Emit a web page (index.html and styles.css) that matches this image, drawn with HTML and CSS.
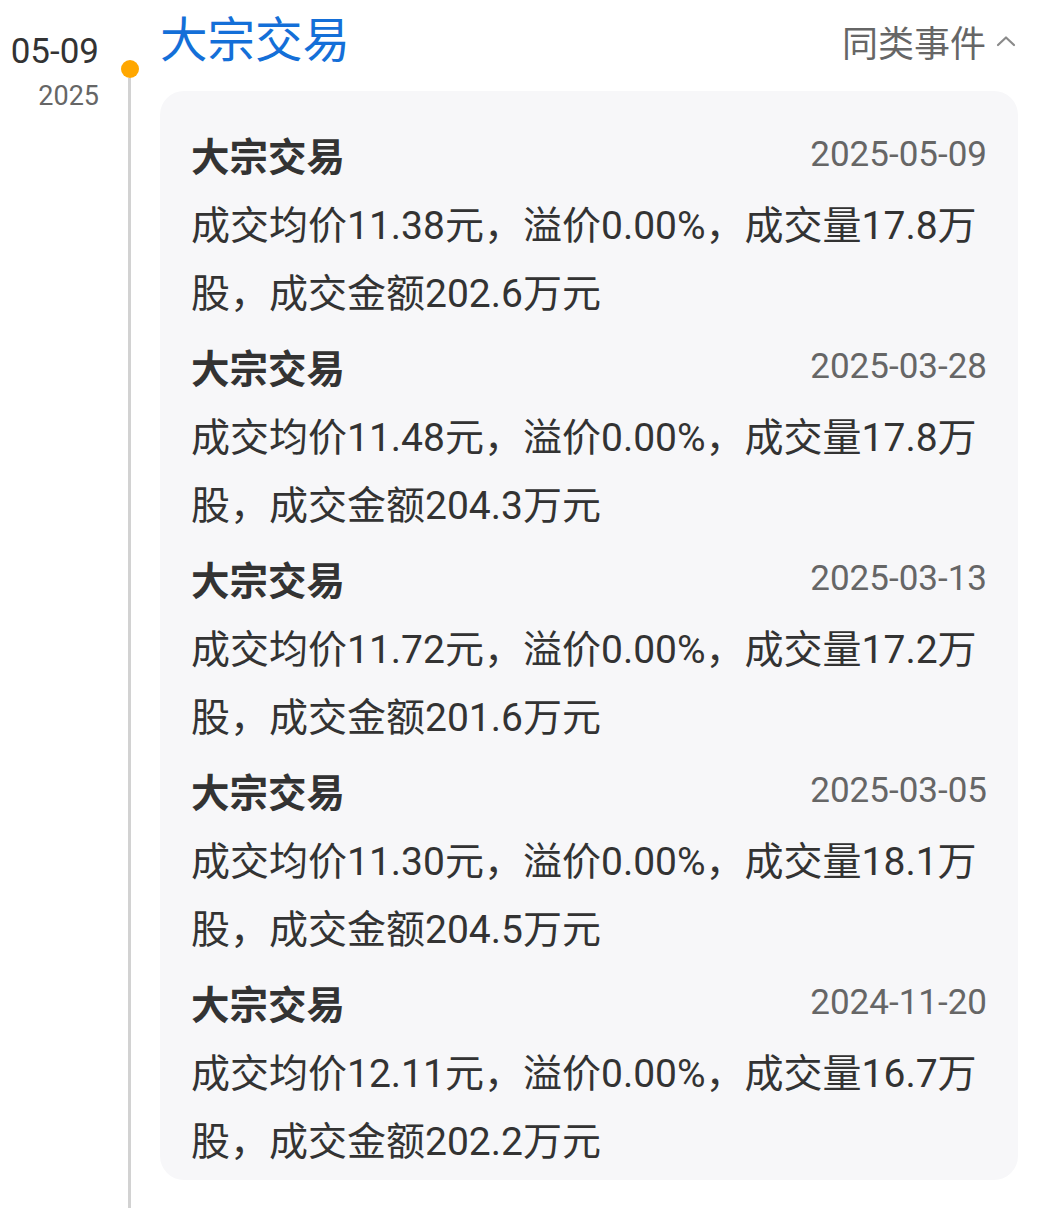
FILE: index.html
```html
<!DOCTYPE html>
<html lang="zh-CN">
<head>
<meta charset="utf-8">
<title>大宗交易</title>
<link rel="stylesheet" href="styles.css">
</head>
<body>
<div class="timeline">
  <div class="when">
    <div class="md">05-09</div>
    <div class="yr">2025</div>
  </div>
  <div class="axis">
    <div class="dot"></div>
    <div class="line"></div>
  </div>
  <div class="main">
    <div class="head">
      <div class="title">大宗交易</div>
      <div class="more">同类事件<svg class="chev" width="20" height="12" viewBox="0 0 20 12"><path d="M2 10 L10 2.5 L18 10" fill="none" stroke="#8a8a8a" stroke-width="2.2" stroke-linecap="round" stroke-linejoin="round"/></svg></div>
    </div>
    <div class="card">
      <div class="item">
        <div class="row"><span class="name">大宗交易</span><span class="date">2025-05-09</span></div>
        <div class="text">成交均价11.38元，溢价0.00%，成交量17.8万股，成交金额202.6万元</div>
      </div>
      <div class="item">
        <div class="row"><span class="name">大宗交易</span><span class="date">2025-03-28</span></div>
        <div class="text">成交均价11.48元，溢价0.00%，成交量17.8万股，成交金额204.3万元</div>
      </div>
      <div class="item">
        <div class="row"><span class="name">大宗交易</span><span class="date">2025-03-13</span></div>
        <div class="text">成交均价11.72元，溢价0.00%，成交量17.2万股，成交金额201.6万元</div>
      </div>
      <div class="item">
        <div class="row"><span class="name">大宗交易</span><span class="date">2025-03-05</span></div>
        <div class="text">成交均价11.30元，溢价0.00%，成交量18.1万股，成交金额204.5万元</div>
      </div>
      <div class="item">
        <div class="row"><span class="name">大宗交易</span><span class="date">2024-11-20</span></div>
        <div class="text">成交均价12.11元，溢价0.00%，成交量16.7万股，成交金额202.2万元</div>
      </div>
    </div>
  </div>
</div>
</body>
</html>
```
FILE: styles.css
```css
html, body {
  margin: 0;
  padding: 0;
  background: #ffffff;
}
body {
  font-family: Roboto, "Noto Sans CJK SC", "Noto Sans", sans-serif;
  color: #333333;
}
.timeline {
  display: flex;
  min-height: 100vh;
  box-sizing: border-box;
}
.when {
  width: 100px;
  flex: none;
  text-align: right;
  padding-top: 30px;
  padding-right: 1px;
  box-sizing: border-box;
}
.md {
  font-size: 35px;
  line-height: 44px;
  color: #333333;
}
.yr {
  font-size: 27px;
  line-height: 44px;
  color: #666666;
}
.axis {
  width: 59px;
  flex: none;
  display: flex;
  flex-direction: column;
  align-items: center;
  padding-top: 60px;
}
.dot {
  width: 18px;
  height: 18px;
  border-radius: 50%;
  background: #ffa700;
  flex: none;
}
.line {
  width: 3px;
  flex: 1;
  background: #d2d2d2;
}
.main {
  flex: none;
  width: 858px;
  margin-left: 1px;
}
.head {
  height: 82px;
  display: flex;
  align-items: center;
  justify-content: space-between;
  padding-right: 2px;
}
.title {
  font-size: 47.5px;
  line-height: 60px;
  color: #146fd8;
}
.more {
  display: flex;
  align-items: center;
  font-size: 36px;
  color: #666666;
  gap: 10px;
}
.chev {
  display: block;
}
.card {
  margin-top: 9px;
  background: #f7f7f9;
  border-radius: 24px;
  padding: 25px 31px 4px 31px;
}
.row {
  display: flex;
  justify-content: space-between;
  align-items: center;
  height: 76px;
}
.name {
  font-size: 38.5px;
  font-weight: 700;
  color: #333333;
}
.date {
  font-size: 35px;
  color: #666666;
}
.text {
  font-size: 39px;
  line-height: 68px;
  color: #333333;
}
```
